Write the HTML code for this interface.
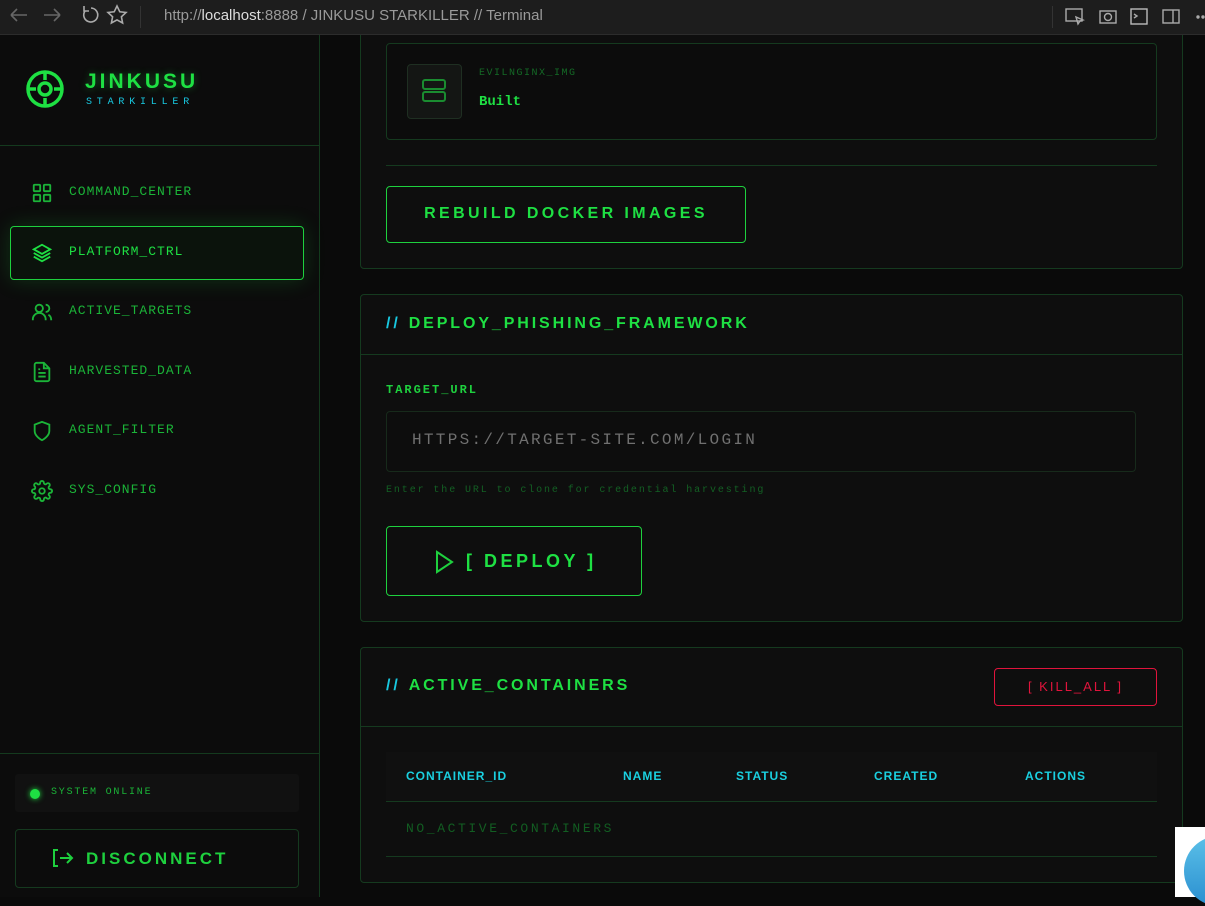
<!DOCTYPE html>
<html><head><meta charset="utf-8"><style>
*{box-sizing:border-box;margin:0;padding:0}
body{width:1205px;height:897px;overflow:hidden;background:#0a0a0a;font-family:"Liberation Mono",monospace;position:relative}
.abs{position:absolute}
.top{left:0;top:0;width:1205px;height:35px;background:#1d1d1d;border-bottom:1px solid #2c2c2c;color:#9a9a9a;font-family:"Liberation Sans",sans-serif;font-size:15px;z-index:10}
.side{left:0;top:35px;width:320px;height:862px;background:#0c0c0c;border-right:1px solid #143a1e}
.nav{left:69px;font-size:13px;letter-spacing:1px;color:#1bb438}
.ico{left:31px;width:22px;height:22px}
.card{background:#0e0e0e;border:1px solid #153a1f;border-radius:4px}
.h{font-family:"Liberation Sans",sans-serif;font-weight:bold;letter-spacing:2px;color:#1ee043}
.th{font-family:"Liberation Sans",sans-serif;font-weight:bold;font-size:12px;color:#1ad0e0;letter-spacing:1px;top:769px}
</style></head><body>
<div class="abs top">
<svg class="abs" style="left:0;top:0" width="140" height="35" fill="none" stroke="#666" stroke-width="1.6"><path d="M11 15h16M11 15l6-6M11 15l6 6"/><path d="M44 15h16M60 15l-6-6M60 15l-6 6"/><path d="M91 8a7 7 0 1 1-6 3M84 6v5h5" stroke="#aaa"/><path d="M117 6l2.8 5.8 6.2.7-4.6 4.3 1.2 6.2-5.6-3.1-5.6 3.1 1.2-6.2-4.6-4.3 6.2-.7z" stroke="#aaa"/></svg>
<div class="abs" style="left:140px;top:6px;width:1px;height:22px;background:#333"></div>
<div class="abs" style="left:164px;top:7px">http://<span style="color:#ddd">localhost</span>:8888 / JINKUSU STARKILLER // Terminal</div>
<div class="abs" style="left:1052px;top:6px;width:1px;height:22px;background:#333"></div>
<svg class="abs" style="left:1064px;top:6px" width="141" height="22" fill="none" stroke="#aaa" stroke-width="1.4"><rect x="2" y="3" width="16" height="12"/><path d="M12 11l2 7 2-3 3-1z"/><rect x="36" y="5" width="16" height="12"/><circle cx="44" cy="11" r="3.5"/><rect x="67" y="3" width="16" height="15" stroke="#bbb"/><path d="M70 8l3 2-3 2"/><rect x="99" y="4" width="16" height="13"/><path d="M109 4v13"/><circle cx="134" cy="11" r="1" fill="#aaa"/><circle cx="139" cy="11" r="1" fill="#aaa"/></svg>
</div>

<div class="abs side"></div>
<svg class="abs" style="left:25px;top:69px" width="40" height="40" fill="none" stroke="#1ee043" stroke-width="3.5"><circle cx="20" cy="20" r="17"/><circle cx="20" cy="20" r="6"/><path d="M20 3v8M20 29v8M3 20h8M29 20h8"/></svg>
<div class="abs h" style="left:85px;top:70px;font-size:21px;letter-spacing:3px;text-shadow:0 0 8px #1ee04366">JINKUSU</div>
<div class="abs" style="left:86px;top:97px;font-size:10px;letter-spacing:4.8px;color:#18c8e0">STARKILLER</div>
<div class="abs" style="left:0;top:145px;width:319px;height:1px;background:#143a1e"></div>
<div class="abs" style="left:10px;top:226px;width:294px;height:54px;border:1.5px solid #1ed03e;border-radius:4px;background:#0b130c;box-shadow:0 0 22px #1ed03e33"></div>
<svg class="abs ico" style="top:182px" viewBox="0 0 24 24" fill="none" stroke="#1bb438" stroke-width="2"><rect x="3" y="3" width="7" height="7" rx="1"/><rect x="14" y="3" width="7" height="7" rx="1"/><rect x="3" y="14" width="7" height="7" rx="1"/><rect x="14" y="14" width="7" height="7" rx="1"/></svg>
<div class="abs nav" style="top:184px">COMMAND_CENTER</div>
<svg class="abs ico" style="top:242px" viewBox="0 0 24 24" fill="none" stroke="#1ee043" stroke-width="2"><path d="M12 3l9 5-9 5-9-5z"/><path d="M3 12l9 5 9-5M3 16l9 5 9-5"/></svg>
<div class="abs nav" style="top:244px;color:#1ee043">PLATFORM_CTRL</div>
<svg class="abs ico" style="top:301px" viewBox="0 0 24 24" fill="none" stroke="#1bb438" stroke-width="2"><circle cx="9" cy="8" r="4"/><path d="M2 21v-1a6 6 0 0 1 14 0v1M16 4a4 4 0 0 1 0 8M22 21v-1a6 6 0 0 0-3-5"/></svg>
<div class="abs nav" style="top:303px">ACTIVE_TARGETS</div>
<svg class="abs ico" style="top:361px" viewBox="0 0 24 24" fill="none" stroke="#1bb438" stroke-width="2"><path d="M14 2H6a2 2 0 0 0-2 2v16a2 2 0 0 0 2 2h12a2 2 0 0 0 2-2V8z"/><path d="M14 2v6h6M8 13h8M8 17h8M8 9h2"/></svg>
<div class="abs nav" style="top:363px">HARVESTED_DATA</div>
<svg class="abs ico" style="top:420px" viewBox="0 0 24 24" fill="none" stroke="#1bb438" stroke-width="2"><path d="M12 22s8-4 8-10V5l-8-3-8 3v7c0 6 8 10 8 10z"/></svg>
<div class="abs nav" style="top:422px">AGENT_FILTER</div>
<svg class="abs ico" style="top:480px" viewBox="0 0 24 24" fill="none" stroke="#1bb438" stroke-width="2"><circle cx="12" cy="12" r="3"/><path d="M19.4 15a1.7 1.7 0 0 0 .3 1.8l.1.1a2 2 0 1 1-2.8 2.8l-.1-.1a1.7 1.7 0 0 0-1.8-.3 1.7 1.7 0 0 0-1 1.5V21a2 2 0 1 1-4 0v-.1a1.7 1.7 0 0 0-1.1-1.5 1.7 1.7 0 0 0-1.8.3l-.1.1a2 2 0 1 1-2.8-2.8l.1-.1a1.7 1.7 0 0 0 .3-1.8 1.7 1.7 0 0 0-1.5-1H3a2 2 0 1 1 0-4h.1a1.7 1.7 0 0 0 1.5-1.1 1.7 1.7 0 0 0-.3-1.8l-.1-.1a2 2 0 1 1 2.8-2.8l.1.1a1.7 1.7 0 0 0 1.8.3H9a1.7 1.7 0 0 0 1-1.5V3a2 2 0 1 1 4 0v.1a1.7 1.7 0 0 0 1 1.5 1.7 1.7 0 0 0 1.8-.3l.1-.1a2 2 0 1 1 2.8 2.8l-.1.1a1.7 1.7 0 0 0-.3 1.8V9a1.7 1.7 0 0 0 1.5 1H21a2 2 0 1 1 0 4h-.1a1.7 1.7 0 0 0-1.5 1z"/></svg>
<div class="abs nav" style="top:482px">SYS_CONFIG</div>
<div class="abs" style="left:0;top:753px;width:319px;height:1px;background:#143a1e"></div>
<div class="abs" style="left:15px;top:774px;width:284px;height:38px;background:#111;border-radius:3px"></div>
<div class="abs" style="left:30px;top:789px;width:10px;height:10px;border-radius:50%;background:#1ee043;box-shadow:0 0 6px #1ee043"></div>
<div class="abs" style="left:51px;top:787px;font-size:10px;letter-spacing:1.8px;color:#1bb438">SYSTEM ONLINE</div>
<div class="abs" style="left:15px;top:829px;width:284px;height:59px;border:1px solid #153a1f;border-radius:4px"></div>
<svg class="abs" style="left:52px;top:848px" width="22" height="20" fill="none" stroke="#1ed03e" stroke-width="2"><path d="M6 2H2v16h4M8 10h12M15 5l5 5-5 5"/></svg>
<div class="abs h" style="left:86px;top:849px;font-size:17px;letter-spacing:3px;color:#1ed03e">DISCONNECT</div>

<!-- card1 -->
<div class="abs card" style="left:360px;top:10px;width:823px;height:259px"></div>
<div class="abs" style="left:386px;top:43px;width:771px;height:97px;border:1px solid #153a1f;border-radius:4px;background:#0c0c0c"></div>
<div class="abs" style="left:407px;top:64px;width:55px;height:55px;border:1px solid #1f2f22;border-radius:4px;background:#141614"></div>
<svg class="abs" style="left:421px;top:77px" width="28" height="28" fill="none" stroke="#1a8c30" stroke-width="2"><rect x="2" y="3" width="22" height="9" rx="2"/><rect x="2" y="15" width="22" height="9" rx="2"/></svg>
<div class="abs" style="left:479px;top:68px;font-size:10px;letter-spacing:1.5px;color:#146a26">EVILNGINX_IMG</div>
<div class="abs" style="left:479px;top:94px;font-size:14px;font-weight:bold;color:#1ee043">Built</div>
<div class="abs" style="left:386px;top:165px;width:771px;height:1px;background:#153a1f"></div>
<div class="abs" style="left:386px;top:186px;width:360px;height:57px;border:1.5px solid #1ed03e;border-radius:4px"></div>
<div class="abs h" style="left:386px;top:205px;width:360px;text-align:center;font-size:16px;letter-spacing:3.4px">REBUILD DOCKER IMAGES</div>

<!-- card2 -->
<div class="abs card" style="left:360px;top:294px;width:823px;height:328px"></div>
<div class="abs" style="left:361px;top:354px;width:821px;height:1px;background:#153a1f"></div>
<div class="abs h" style="left:386px;top:315px;font-size:16px;letter-spacing:2.9px"><span style="color:#18c8e0;margin-right:8px">//</span>DEPLOY_PHISHING_FRAMEWORK</div>
<div class="abs" style="left:386px;top:383px;font-size:12px;letter-spacing:2px;color:#1ed03e;font-weight:bold">TARGET_URL</div>
<div class="abs" style="left:386px;top:411px;width:750px;height:61px;border:1px solid #172a1b;border-radius:4px;background:#0d0d0d"></div>
<div class="abs" style="left:412px;top:431px;font-size:16px;letter-spacing:2.3px;color:#707070">HTTPS://TARGET-SITE.COM/LOGIN</div>
<div class="abs" style="left:386px;top:485px;font-size:10px;letter-spacing:1.9px;color:#136024">Enter the URL to clone for credential harvesting</div>
<div class="abs" style="left:386px;top:526px;width:256px;height:70px;border:1.5px solid #1ed03e;border-radius:4px"></div>
<svg class="abs" style="left:434px;top:550px" width="20" height="24" fill="none" stroke="#1ed03e" stroke-width="2"><path d="M3 2l15 10-15 10z"/></svg>
<div class="abs h" style="left:466px;top:551px;font-size:18px;letter-spacing:3.5px">[ DEPLOY ]</div>

<!-- card3 -->
<div class="abs card" style="left:360px;top:647px;width:823px;height:236px"></div>
<div class="abs" style="left:361px;top:726px;width:821px;height:1px;background:#153a1f"></div>
<div class="abs h" style="left:386px;top:677px;font-size:16px;letter-spacing:2.9px"><span style="color:#18c8e0;margin-right:8px">//</span>ACTIVE_CONTAINERS</div>
<div class="abs" style="left:994px;top:668px;width:163px;height:38px;border:1.5px solid #e0143c;border-radius:4px;color:#e0143c;font-family:'Liberation Sans',sans-serif;font-size:13px;letter-spacing:2px;text-align:center;line-height:35px">[ KILL_ALL ]</div>
<div class="abs" style="left:386px;top:752px;width:771px;height:50px;background:#101010;border-bottom:1px solid #153a1f"></div>
<div class="abs th" style="left:406px">CONTAINER_ID</div>
<div class="abs th" style="left:623px">NAME</div>
<div class="abs th" style="left:736px">STATUS</div>
<div class="abs th" style="left:874px">CREATED</div>
<div class="abs th" style="left:1025px">ACTIONS</div>
<div class="abs" style="left:406px;top:821px;font-size:13px;letter-spacing:2.6px;color:#125e22">NO_ACTIVE_CONTAINERS</div>
<div class="abs" style="left:386px;top:856px;width:771px;height:1px;background:#153a1f"></div>

<div class="abs" style="left:1175px;top:827px;width:30px;height:70px;background:#fff"></div>
<div class="abs" style="left:1184px;top:836px;width:70px;height:70px;border-radius:50%;background:linear-gradient(#5bc0e8,#2a8fd0)"></div>
</body></html>
